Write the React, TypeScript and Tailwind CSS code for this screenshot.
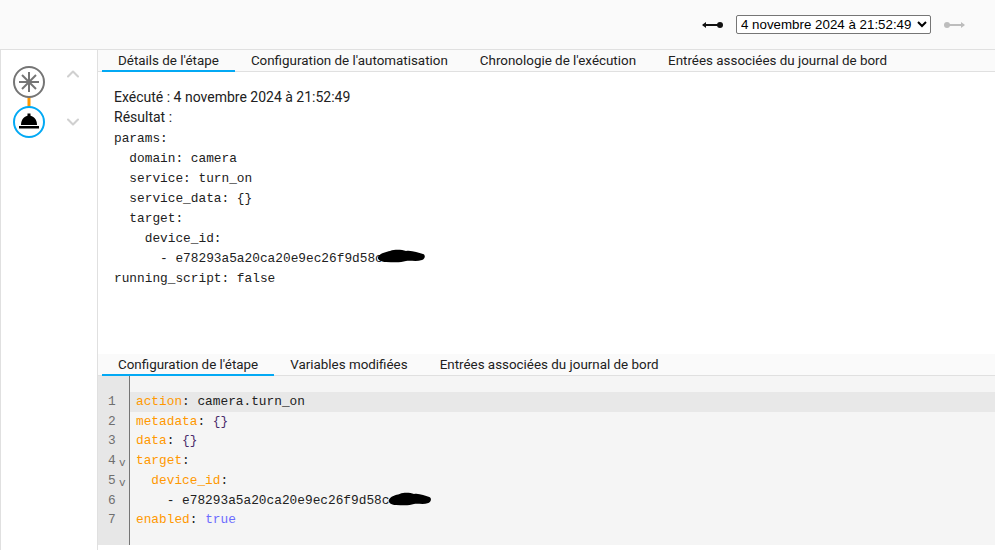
import { ChevronDown, ChevronUp } from "lucide-react";

const mono = "font-['Liberation_Mono',monospace] text-[12.8px]";

function Blob({ className }: { className: string }) {
  return (
    <svg className={`absolute ${className}`} width="50" height="16" viewBox="0 0 50 16" preserveAspectRatio="none">
      <path d="M2 9 C4 5 10 4 14 3 C20 1 26 2 30 3 C36 2 42 5 47 6 C50 7 49 11 46 12 C40 14 34 12 30 13 C24 15 16 14 10 14 C6 14 1 12 2 9 Z" fill="#000" />
    </svg>
  );
}

function Tabs({ items }: { items: string[] }) {
  return (
    <div className="flex h-[22px] shrink-0 border-b border-[#e0e0e0] bg-[#fafafa] pl-[4px] font-['Roboto',sans-serif] text-[13.4px] leading-[21px] text-[#212121]">
      {items.map((item, i) => (
        <div
          key={item}
          className={`h-[22px] px-[16px] ${i === 0 ? "border-b-2 border-[#03a9f4]" : ""}`}
        >
          {item}
        </div>
      ))}
    </div>
  );
}

function ArrowLeft() {
  return (
    <svg width="22" height="8" viewBox="0 0 22 8">
      <path d="M1 4 H17" stroke="#111" strokeWidth="2" />
      <path d="M0 4 L4 1 V7 Z" fill="#111" />
      <circle cx="18" cy="4" r="3" fill="#111" />
    </svg>
  );
}

function ArrowRight() {
  return (
    <svg width="22" height="8" viewBox="0 0 22 8">
      <path d="M4 4 H21" stroke="#bdbdbd" strokeWidth="2" />
      <path d="M22 4 L18 1 V7 Z" fill="#bdbdbd" />
      <circle cx="4" cy="4" r="3" fill="#bdbdbd" />
    </svg>
  );
}

function Graph() {
  return (
    <svg width="34" height="74" viewBox="0 0 34 74">
      <rect x="15.5" y="31" width="3" height="12" fill="#ff9800" />
      <circle cx="17" cy="17" r="15" fill="#fff" stroke="#757575" strokeWidth="2" />
      <g stroke="#757575" strokeWidth="2">
        <path d="M17 7 V27" />
        <path d="M7 17 H27" />
        <path d="M10 10 L24 24" />
        <path d="M24 10 L10 24" />
      </g>
      <circle cx="17" cy="57" r="15" fill="#fff" stroke="#03a9f4" strokeWidth="2" />
      <path d="M9 60 C9 54 13 50.5 17 50.5 C21 50.5 25 54 25 60 Z" fill="#000" />
      <rect x="7" y="61" width="20" height="2.5" fill="#000" />
      <rect x="15.5" y="48.5" width="3" height="2.5" fill="#000" />
    </svg>
  );
}

const lines = [1, 2, 3, 4, 5, 6, 7];

export default function App() {
  return (
    <div className="flex h-[550px] w-[995px] flex-col overflow-hidden bg-white font-['Roboto',sans-serif] text-[#212121]">
      <header className="flex h-[50px] shrink-0 items-center justify-end gap-[12px] border-b border-[#e0e0e0] bg-[#fafafa] pr-[30px]">
        <ArrowLeft />
        <select className="h-[19px] w-[195px] rounded-[2px] border border-[#767676] bg-white font-['Liberation_Sans',sans-serif] text-[13.33px] leading-none text-black">
          <option>4 novembre 2024 à 21:52:49</option>
        </select>
        <ArrowRight />
      </header>

      <div className="flex min-h-0 flex-1 border-l border-[#e0e0e0]">
        <aside className="flex w-[97px] shrink-0 gap-[17px] border-r border-[#e0e0e0] pl-[11px] pt-[15px]">
          <Graph />
          <div className="mt-[-1px] flex flex-col gap-[28px] text-[#d0d0d0]">
            <ChevronUp size={20} strokeWidth={2.5} />
            <ChevronDown size={20} strokeWidth={2.5} />
          </div>
        </aside>

        <main className="flex min-w-0 flex-1 flex-col">
          <Tabs
            items={[
              "Détails de l'étape",
              "Configuration de l'automatisation",
              "Chronologie de l'exécution",
              "Entrées associées du journal de bord",
            ]}
          />
          <section className="h-[282px] shrink-0 pl-[16px] pt-[15px] text-[14px] leading-[20px]">
            <div>Exécuté : 4 novembre 2024 à 21:52:49</div>
            <div>Résultat :</div>
            <pre className={`${mono} mt-[2px] leading-[20px]`}>
              {"params:\n  domain: camera\n  service: turn_on\n  service_data: {}\n  target:\n    device_id:\n      - "}
              <span className="relative">
                e78293a5a20ca20e9ec26f9d58c
                <Blob className="left-[201px] top-[-3px]" />
              </span>
              {"\nrunning_script: false"}
            </pre>
          </section>

          <Tabs
            items={[
              "Configuration de l'étape",
              "Variables modifiées",
              "Entrées associées du journal de bord",
            ]}
          />
          <section className={`flex h-[169px] shrink-0 bg-[#f5f5f5] ${mono} leading-[19.7px]`}>
            <div className="w-[32px] shrink-0 border-r border-[#757575] bg-[#e7e7e7] pt-[16px] pl-[10px] text-[#6f6f6f]">
              {lines.map((n) => (
                <div key={n} className="relative">
                  {n}
                  {(n === 4 || n === 5) && (
                    <span className="absolute left-[11px] top-[3px] text-[11px]">v</span>
                  )}
                </div>
              ))}
            </div>
            <pre className={`min-w-0 flex-1 pt-[16px] ${mono} leading-[19.7px] text-[#212121]`}>
              <div className="bg-[#e8e8e8] pl-[6px]">
                <span className="text-[#ff9800]">action</span>: camera.turn_on
              </div>
              <div className="pl-[6px]">
                <span className="text-[#ff9800]">metadata</span>: <span className="text-[#4a2a6a]">{"{}"}</span>
              </div>
              <div className="pl-[6px]">
                <span className="text-[#ff9800]">data</span>: <span className="text-[#4a2a6a]">{"{}"}</span>
              </div>
              <div className="pl-[6px]">
                <span className="text-[#ff9800]">target</span>:
              </div>
              <div className="pl-[6px]">
                {"  "}
                <span className="text-[#ff9800]">device_id</span>:
              </div>
              <div className="pl-[6px]">
                {"    - "}
                <span className="relative">
                  e78293a5a20ca20e9ec26f9d58c
                  <Blob className="left-[205px] top-[-2px] w-[45px]" />
                </span>
              </div>
              <div className="pl-[6px]">
                <span className="text-[#ff9800]">enabled</span>: <span className="text-[#6b6bff]">true</span>
              </div>
            </pre>
          </section>
        </main>
      </div>
    </div>
  );
}
